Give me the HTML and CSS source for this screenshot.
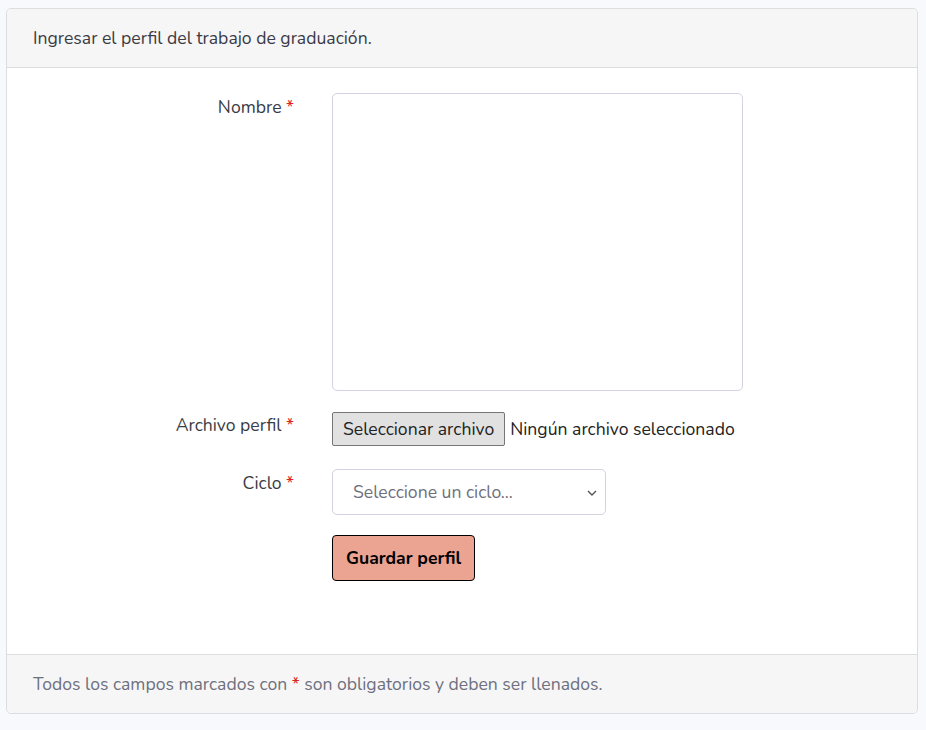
FILE: index.html
```html
<!DOCTYPE html>
<html lang="es">
<head>
<meta charset="utf-8">
<link rel="stylesheet" href="styles.css">
</head>
<body>
<div class="card">
  <div class="card-header">Ingresar el perfil del trabajo de graduación.</div>
  <div class="card-body">
    <form class="form">
      <label class="label label-name">Nombre <span class="req">*</span></label>
      <div class="field"><textarea class="textarea"></textarea></div>

      <label class="label label-file">Archivo perfil <span class="req">*</span></label>
      <div class="field file-field">
        <span class="file-btn">Seleccionar archivo</span>
        <span class="file-name">Ningún archivo seleccionado</span>
      </div>

      <label class="label label-ciclo">Ciclo <span class="req">*</span></label>
      <div class="field select-field">
        <div class="select">
          <span>Seleccione un ciclo...</span>
          <svg class="chev" width="10" height="6" viewBox="0 0 10 6"><path d="M1 1l4 4 4-4" fill="none" stroke="#555" stroke-width="1.4"/></svg>
        </div>
      </div>

      <div></div>
      <div class="field btn-field"><button type="button" class="btn">Guardar perfil</button></div>
    </form>
  </div>
  <div class="card-footer">Todos los campos marcados con <span class="req">*</span> son obligatorios y deben ser llenados.</div>
</div>
</body>
</html>
```
FILE: styles.css
```css
html, body {
  margin: 0;
  background: #f8f9fc;
}
body {
  padding: 8px 8px 0 6px;
  font-family: "Nunito", "Open Sans", "Liberation Sans", sans-serif;
  font-size: 17.6px;
  line-height: 1.5;
  color: #3a3b45;
}
.card {
  background: #fff;
  border: 1px solid #dcdde1;
  border-radius: 5px;
  height: 706px;
  box-sizing: border-box;
  display: flex;
  flex-direction: column;
}
.card-header {
  background: #f6f6f6;
  border-bottom: 1px solid #dcdde1;
  border-radius: 5px 5px 0 0;
  padding: 16px 26px;
  height: 59px;
  box-sizing: border-box;
}
.card-body {
  flex: 1;
  padding: 25px 0 0 0;
}
.form {
  display: grid;
  grid-template-columns: 287px 1fr;
  column-gap: 38px;
  row-gap: 0;
  align-items: start;
}
.label {
  text-align: right;
}
.label-name { padding-top: 1px; }
.label-file { margin-top: 21px; }
.file-field { margin-top: 21px; }
.label-ciclo { margin-top: 24px; }
.select-field { margin-top: 23px; }
.btn-field { margin-top: 20px; }
.req { color: #e02020; }
.textarea {
  display: block;
  width: 411px;
  height: 298px;
  border: 1px solid #d1d3e2;
  border-radius: 5px;
  box-sizing: border-box;
  resize: none;
  margin: 0;
}
.file-field {
  display: flex;
  align-items: center;
  gap: 5px;
}
.file-btn {
  display: inline-block;
  background: #e1e1e1;
  border: 1px solid #767676;
  border-radius: 2px;
  padding: 3px 10px;
  line-height: 26px;
  color: #222;
}
.file-name { color: #222; }
.select {
  width: 274px;
  height: 46px;
  box-sizing: border-box;
  border: 1px solid #d1d3e2;
  border-radius: 5px;
  display: flex;
  align-items: center;
  justify-content: space-between;
  padding: 0 8px 0 20px;
  color: #6e707e;
}
.chev { margin-top: 2px; }
.btn {
  font-family: inherit;
  font-size: 17.6px;
  font-weight: 700;
  background: #eba392;
  color: #000;
  border: 1px solid #000;
  border-radius: 4px;
  padding: 0 13px;
  height: 46px;
  line-height: 44px;
}
.card-footer {
  background: #f6f6f6;
  border-top: 1px solid #dcdde1;
  border-radius: 0 0 5px 5px;
  padding: 16px 26px;
  height: 59px;
  box-sizing: border-box;
  color: #6e707e;
}
```
